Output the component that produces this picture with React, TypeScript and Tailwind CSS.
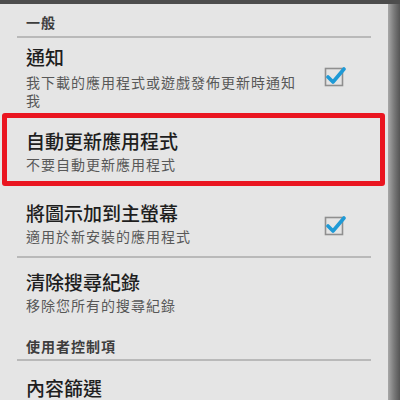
import React from "react";

const font = {
  fontFamily: '"Noto Sans CJK TC", "Noto Sans CJK SC", "Noto Sans", sans-serif',
};

const CheckBox: React.FC = () => (
  <svg width="22" height="22" viewBox="0 0 22 22" className="shrink-0">
    <rect x="1.5" y="2.5" width="17" height="17" fill="#e4e4e4" stroke="#8f8f8f" strokeWidth="1.6" />
    <path d="M4 11 L9 16 L20 3" fill="none" stroke="#1f9ad6" strokeWidth="3.6" strokeLinejoin="round" strokeLinecap="round" />
  </svg>
);

const Divider: React.FC = () => <div className="mx-[17px] h-[2px] bg-[#b9b9b9]" />;

export default function App() {
  return (
    <div className="w-[400px] h-[400px] flex flex-col bg-[#4d4d4d] overflow-hidden" style={font}>
      <div className="h-[4px] shrink-0" />
      <div className="flex flex-1 min-h-0">
        <div className="w-[388px] bg-[#e5e5e5] flex flex-col overflow-hidden">
          {/* 一般 */}
          <div className="h-[32px] pt-[4px] pl-[26px] flex items-center text-[14px] font-bold tracking-[1px] text-[#3d3d3d] shrink-0">
            一般
          </div>
          <Divider />

          {/* 通知 */}
          <div className="h-[74px] flex items-center pl-[26px] pr-[42px] shrink-0">
            <div className="flex-1 self-start pt-[7px]">
              <div className="text-[19px] leading-[24px] font-medium text-[#1e1e1e]">通知</div>
              <div className="mt-[4px] w-[282px] text-[14px] tracking-[1px] leading-[18px] text-[#585858]">
                我下載的應用程式或遊戲發佈更新時通知我
              </div>
            </div>
            <div className="mt-[4px]">
              <CheckBox />
            </div>
          </div>

          {/* 自動更新應用程式 */}
          <div className="ml-[2px] mt-[1px] w-[383px] h-[73px] border-[5px] border-[#ea1520] rounded-[3px] pl-[19px] pt-[11px] shrink-0">
            <div className="text-[19px] leading-[24px] font-medium text-[#1e1e1e]">自動更新應用程式</div>
            <div className="mt-[2px] text-[14px] tracking-[1px] leading-[18px] text-[#585858]">
              不要自動更新應用程式
            </div>
          </div>

          {/* 將圖示加到主螢幕 */}
          <div className="h-[70px] flex items-start pl-[26px] pr-[42px] pt-[15px] shrink-0">
            <div className="flex-1">
              <div className="text-[19px] leading-[24px] font-medium text-[#1e1e1e]">將圖示加到主螢幕</div>
              <div className="mt-[2px] text-[14px] tracking-[1px] leading-[18px] text-[#585858]">
                適用於新安裝的應用程式
              </div>
            </div>
            <div className="mt-[14px]">
              <CheckBox />
            </div>
          </div>
          <Divider />

          {/* 清除搜尋紀錄 */}
          <div className="pl-[26px] pt-[12px] pb-[12px] shrink-0">
            <div className="text-[19px] leading-[24px] font-medium text-[#1e1e1e]">清除搜尋紀錄</div>
            <div className="mt-[2px] text-[14px] tracking-[1px] leading-[18px] text-[#585858]">
              移除您所有的搜尋紀錄
            </div>
          </div>

          {/* 使用者控制項 */}
          <div className="pl-[26px] pt-[10px] pb-[3px] text-[14px] leading-[20px] font-bold tracking-[1px] text-[#3d3d3d] shrink-0">
            使用者控制項
          </div>
          <Divider />

          {/* 內容篩選 */}
          <div className="pl-[26px] pt-[15px] shrink-0">
            <div className="text-[19px] leading-[24px] font-medium text-[#1e1e1e]">內容篩選</div>
          </div>
        </div>
        <div className="w-[12px] bg-gradient-to-r from-[#a8a8a8] via-[#7a7a7a] to-[#555555]" />
      </div>
    </div>
  );
}
